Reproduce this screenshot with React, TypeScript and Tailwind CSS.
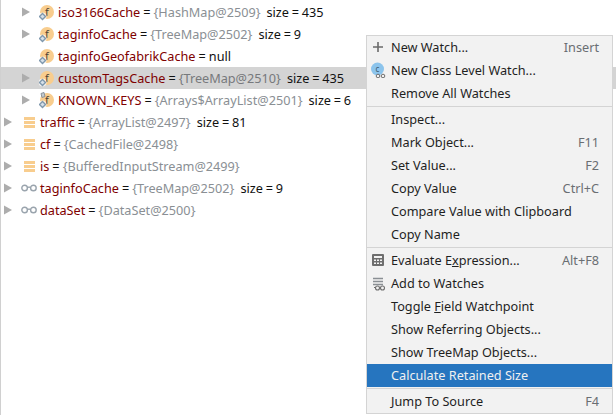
import { ReactNode } from "react";

function Arrow() {
  return (
    <svg width="8" height="10" viewBox="0 0 8 10" className="shrink-0">
      <path d="M0 0.5 L8 5 L0 9.5 Z" fill="#adadad" />
    </svg>
  );
}

function FieldIcon({ pinned }: { pinned?: boolean }) {
  return (
    <svg width="16" height="18" viewBox="0 0 16 18" className="shrink-0">
      <circle cx="8" cy="9" r="7" fill="#f8cd8e" />
      <text x="8" y="13" textAnchor="middle" fontSize="11" fontFamily="Noto Sans, sans-serif" fill="#4f4334">f</text>
      <circle cx="3.5" cy="13.5" r="4" fill="#ffffff" fillOpacity="0.7" />
      <path d="M3.5 10.5 L6.5 13.5 L3.5 16.5 L0.5 13.5 Z" fill="#d7e0e8" stroke="#7f98ad" strokeWidth="1.4" />
      {pinned && <path d="M2 2.5 L5 1.5 L6 5.5 L3 6.5 Z" fill="#c3cad0" stroke="#8b949c" />}
    </svg>
  );
}

function ArrayIcon() {
  return (
    <div className="w-[11px] h-[11px] flex flex-col justify-between shrink-0">
      <div className="h-[3px] bg-[#f8cd8e]" />
      <div className="h-[3px] bg-[#f8cd8e]" />
      <div className="h-[3px] bg-[#f8cd8e]" />
    </div>
  );
}

function Glasses() {
  return (
    <svg width="16" height="8" viewBox="0 0 16 8" className="shrink-0">
      <circle cx="3.6" cy="4" r="2.8" fill="none" stroke="#9aa4ad" strokeWidth="1.4" />
      <circle cx="12.4" cy="4" r="2.8" fill="none" stroke="#9aa4ad" strokeWidth="1.4" />
      <path d="M6.4 3.2 H9.6" stroke="#9aa4ad" strokeWidth="1.4" />
    </svg>
  );
}

type Row = {
  name: string;
  value: string;
  size?: string;
  kind: "field" | "pinned" | "array" | "watch";
  noArrow?: boolean;
  active?: boolean;
  plain?: boolean;
};

const rows: Row[] = [
  { name: "iso3166Cache", value: "{HashMap@2509}", size: "size = 435", kind: "field" },
  { name: "taginfoCache", value: "{TreeMap@2502}", size: "size = 9", kind: "field" },
  { name: "taginfoGeofabrikCache", value: "null", kind: "field", noArrow: true, plain: true },
  { name: "customTagsCache", value: "{TreeMap@2510}", size: "size = 435", kind: "field", active: true },
  { name: "KNOWN_KEYS", value: "{Arrays$ArrayList@2501}", size: "size = 6", kind: "pinned" },
  { name: "traffic", value: "{ArrayList@2497}", size: "size = 81", kind: "array" },
  { name: "cf", value: "{CachedFile@2498}", kind: "array" },
  { name: "is", value: "{BufferedInputStream@2499}", kind: "array" },
  { name: "taginfoCache", value: "{TreeMap@2502}", size: "size = 9", kind: "watch" },
  { name: "dataSet", value: "{DataSet@2500}", kind: "watch" },
];

function TreeRow({ row }: { row: Row }) {
  const deep = row.kind === "field" || row.kind === "pinned";
  return (
    <div className={`h-[22px] flex items-center whitespace-nowrap ${deep ? "pl-[21px]" : "pl-[3px]"} ${row.active ? "bg-[#d4d4d4]" : ""}`}>
      <div className="w-[8px] shrink-0">{!row.noArrow && <Arrow />}</div>
      {deep && (
        <div className="w-[28px] pl-[9px] flex items-center shrink-0">
          <FieldIcon pinned={row.kind === "pinned"} />
        </div>
      )}
      {row.kind === "array" && (
        <div className="w-[28px] pl-[12px] flex items-center shrink-0">
          <ArrayIcon />
        </div>
      )}
      {row.kind === "watch" && (
        <div className="w-[28px] pl-[9px] flex items-center shrink-0">
          <Glasses />
        </div>
      )}
      <div>
        <span className="text-[#7f0000]">{row.name}</span>
        <span className="text-[#111111] ml-[3px]">=</span>
        <span className={`ml-[3px] ${row.plain ? "text-[#111111]" : row.active ? "text-[#77797c]" : "text-[#8a8f94]"}`}>{row.value}</span>
        {row.size && <span className="text-[#111111] ml-[6px] [word-spacing:-0.5px]">{row.size}</span>}
      </div>
    </div>
  );
}

type Item = {
  label: ReactNode;
  shortcut?: string;
  icon?: ReactNode;
  selected?: boolean;
};

const PlusIcon = (
  <svg width="16" height="16" viewBox="0 0 16 16">
    <path d="M7 3 V13 M2 8 H12" stroke="#6a6a6a" strokeWidth="1.6" />
  </svg>
);

const ClassWatchIcon = (
  <svg width="16" height="16" viewBox="0 0 16 16">
    <circle cx="6.5" cy="7" r="6.5" fill="#8cc4ec" />
    <text x="6.5" y="10" textAnchor="middle" fontSize="8" fontFamily="Noto Sans, sans-serif" fill="#3c5a73">c</text>
    <circle cx="7" cy="14" r="1.8" fill="#f2f2f2" stroke="#6e6e6e" />
    <circle cx="12" cy="14" r="1.8" fill="#f2f2f2" stroke="#6e6e6e" />
  </svg>
);

const CalcIcon = (
  <svg width="16" height="16" viewBox="0 0 16 16">
    <rect x="1" y="2" width="12" height="12" rx="1" fill="#6e6e6e" />
    <rect x="3" y="4" width="8" height="2" fill="#f2f2f2" />
    <path d="M3 7.5 h2 v1.5 h-2 Z M6 7.5 h2 v1.5 h-2 Z M9 7.5 h2 v1.5 h-2 Z M3 10.5 h2 v1.5 h-2 Z M6 10.5 h2 v1.5 h-2 Z M9 10.5 h2 v1.5 h-2 Z" fill="#f2f2f2" />
  </svg>
);

const AddWatchIcon = (
  <svg width="16" height="16" viewBox="0 0 16 16">
    <path d="M2 3.5 H12 M2 6.5 H12 M2 9.5 H12" stroke="#8a8f94" strokeWidth="1.4" />
    <circle cx="6.5" cy="13" r="2" fill="#f2f2f2" stroke="#6e6e6e" strokeWidth="1.1" />
    <circle cx="11.5" cy="13" r="2" fill="#f2f2f2" stroke="#6e6e6e" strokeWidth="1.1" />
    <path d="M3 12.5 H4.5" stroke="#6e6e6e" />
  </svg>
);

const groups: Item[][] = [
  [
    { label: "New Watch...", shortcut: "Insert", icon: PlusIcon },
    { label: "New Class Level Watch...", icon: ClassWatchIcon },
    { label: "Remove All Watches" },
  ],
  [
    { label: "Inspect..." },
    { label: "Mark Object...", shortcut: "F11" },
    { label: "Set Value...", shortcut: "F2" },
    { label: "Copy Value", shortcut: "Ctrl+C" },
    { label: "Compare Value with Clipboard" },
    { label: "Copy Name" },
  ],
  [
    { label: <>Evaluate E<u>x</u>pression...</>, shortcut: "Alt+F8", icon: CalcIcon },
    { label: "Add to Watches", icon: AddWatchIcon },
    { label: <>Toggle <u>F</u>ield Watchpoint</> },
    { label: "Show Referring Objects..." },
    { label: "Show TreeMap Objects..." },
    { label: "Calculate Retained Size", selected: true },
  ],
  [{ label: "Jump To Source", shortcut: "F4" }],
];

function MenuRow({ item }: { item: Item }) {
  return (
    <div className={`h-[23px] flex items-center pb-px pr-[13px] whitespace-nowrap ${item.selected ? "bg-[#2675bf] text-[#f0f0f0]" : "text-[#1f1f1f]"}`}>
      <div className="w-[24px] shrink-0 pl-[4px] flex items-center">{item.icon}</div>
      <span className="flex-1">{item.label}</span>
      {item.shortcut && <span className="text-[#6a6e72]">{item.shortcut}</span>}
    </div>
  );
}

export default function App() {
  return (
    <div className="relative w-[616px] h-[415px] overflow-hidden bg-white leading-[18px] font-['Noto_Sans',sans-serif]">
      <div className="h-full pt-px border-l border-[#d0d0d0] text-[12.7px]">
        {rows.map((r, i) => (
          <TreeRow key={i} row={r} />
        ))}
      </div>
      <div className="absolute left-[366px] top-[35px] w-[247px] bg-[#f2f2f2] border border-[#d4d4d4] text-[12.7px]">
        {groups.map((g, i) => (
          <div key={i} className={i > 0 ? "border-t border-[#d4d4d4] mt-px pt-px" : ""}>
            {g.map((item, j) => (
              <MenuRow key={j} item={item} />
            ))}
          </div>
        ))}
      </div>
    </div>
  );
}
